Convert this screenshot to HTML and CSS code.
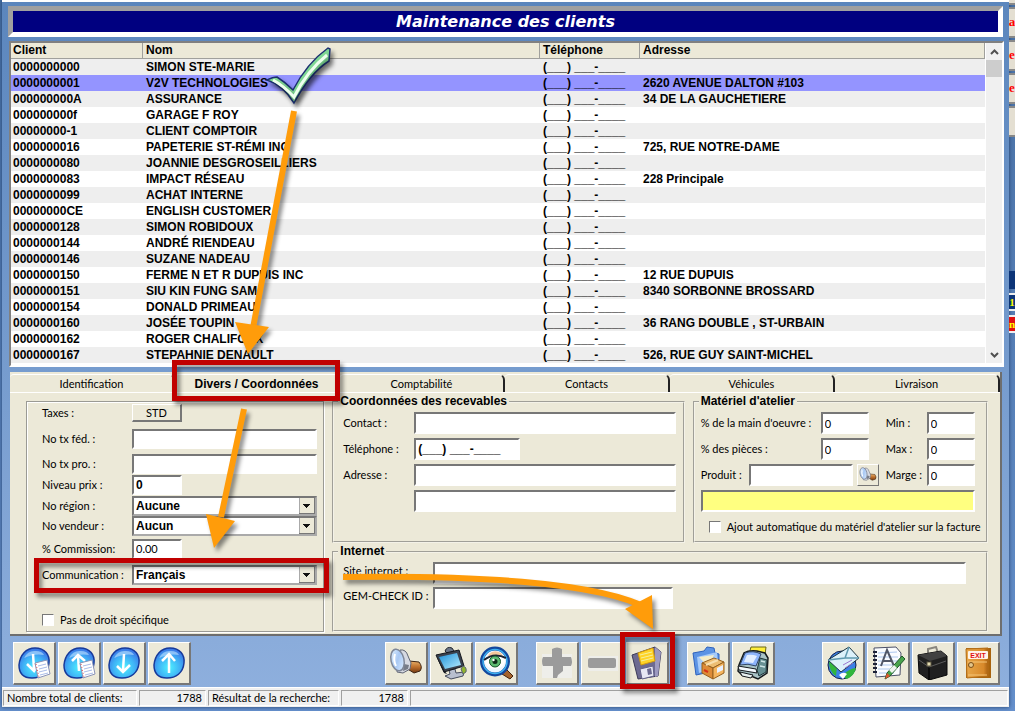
FILE: index.html
```html
<!DOCTYPE html>
<html lang="fr">
<head>
<meta charset="utf-8">
<title>Maintenance des clients</title>
<link rel="stylesheet" href="styles.css">
</head>
<body>
<svg class="defs" aria-hidden="true">
  <defs>
    <radialGradient id="ball" cx=".5" cy=".65" r=".6"><stop offset="0" stop-color="#4ff0ff"/><stop offset=".6" stop-color="#3fb2f6"/><stop offset="1" stop-color="#3b7be8"/></radialGradient>
    <linearGradient id="glass" x1="0" y1="0" x2="1" y2="1"><stop offset="0" stop-color="#e8f5ff"/><stop offset=".5" stop-color="#a8c8f4"/><stop offset="1" stop-color="#e2f0ff"/></linearGradient>
    <linearGradient id="wood" x1="0" y1="0" x2="0" y2="1"><stop offset="0" stop-color="#eab068"/><stop offset=".5" stop-color="#bd6f2c"/><stop offset="1" stop-color="#713812"/></linearGradient>
    <linearGradient id="screen" x1="0" y1="0" x2="1" y2="1"><stop offset="0" stop-color="#1c8fd8"/><stop offset="1" stop-color="#b5ecff"/></linearGradient>
    <linearGradient id="door" x1="0" y1="0" x2="1" y2="0"><stop offset="0" stop-color="#e8a84a"/><stop offset=".8" stop-color="#d8892a"/><stop offset="1" stop-color="#a86010"/></linearGradient>
    <g id="notepad"><path d="M18 17l12-3 3 14-12 4z" fill="#fff" stroke="#8a93b8"/><path d="M21 20l8-2M22 23l8-2M22 26l8-2M23 29l8-2" stroke="#a9bce8"/><path d="M19 18l3 13" stroke="#e05050" stroke-dasharray="1 2"/></g>
    <symbol id="lamp" viewBox="0 0 34 34">
      <path d="M20 15l10 1q4 5 1 9l-6 2-8-5z" fill="url(#wood)" stroke="#3d2412"/>
      <path d="M11 4q6-1 8 6l3 7-1 6-7 4-6-1z" fill="#d6d9e2" stroke="#5f6474"/>
      <path d="M15 18l5 1-1 4-5 2z" fill="#777c88"/>
      <ellipse cx="8.500" cy="14" rx="6.500" ry="11" transform="rotate(-12 8.500 14)" fill="url(#glass)" stroke="#7f8798" stroke-width="1.500"/>
      <path d="M6 8q-2 6 1 12" stroke="#fff" stroke-width="2" fill="none"/>
    </symbol>
  </defs>
</svg>

<div class="screen">
<main class="window">
  <h1 class="title">Maintenance des clients</h1>

  <div class="list">
    <table class="clients">
      <colgroup><col class="c-id"><col class="c-name"><col class="c-tel"><col></colgroup>
      <thead><tr><th>Client</th><th>Nom</th><th>Téléphone</th><th>Adresse</th></tr></thead>
      <tbody>
        <tr><td>0000000000</td><td>SIMON STE-MARIE</td><td>(___) ___-____</td><td></td></tr>
        <tr class="selected"><td>0000000001</td><td>V2V TECHNOLOGIES</td><td>(___) ___-____</td><td>2620 AVENUE DALTON #103</td></tr>
        <tr><td>000000000A</td><td>ASSURANCE</td><td>(___) ___-____</td><td>34 DE LA GAUCHETIERE</td></tr>
        <tr><td>000000000f</td><td>GARAGE F ROY</td><td>(___) ___-____</td><td></td></tr>
        <tr><td>00000000-1</td><td>CLIENT COMPTOIR</td><td>(___) ___-____</td><td></td></tr>
        <tr><td>0000000016</td><td>PAPETERIE ST-RÉMI INC</td><td>(___) ___-____</td><td>725, RUE NOTRE-DAME</td></tr>
        <tr><td>0000000080</td><td>JOANNIE DESGROSEILLIERS</td><td>(___) ___-____</td><td></td></tr>
        <tr><td>0000000083</td><td>IMPACT RÉSEAU</td><td>(___) ___-____</td><td>228 Principale</td></tr>
        <tr><td>0000000099</td><td>ACHAT INTERNE</td><td>(___) ___-____</td><td></td></tr>
        <tr><td>00000000CE</td><td>ENGLISH CUSTOMER</td><td>(___) ___-____</td><td></td></tr>
        <tr><td>0000000128</td><td>SIMON ROBIDOUX</td><td>(___) ___-____</td><td></td></tr>
        <tr><td>0000000144</td><td>ANDRÉ RIENDEAU</td><td>(___) ___-____</td><td></td></tr>
        <tr><td>0000000146</td><td>SUZANE NADEAU</td><td>(___) ___-____</td><td></td></tr>
        <tr><td>0000000150</td><td>FERME N ET R DUPUIS INC</td><td>(___) ___-____</td><td>12 RUE DUPUIS</td></tr>
        <tr><td>0000000151</td><td>SIU KIN FUNG SAM</td><td>(___) ___-____</td><td>8340 SORBONNE BROSSARD</td></tr>
        <tr><td>0000000154</td><td>DONALD PRIMEAU</td><td>(___) ___-____</td><td></td></tr>
        <tr><td>0000000160</td><td>JOSÉE TOUPIN</td><td>(___) ___-____</td><td>36 RANG DOUBLE , ST-URBAIN</td></tr>
        <tr><td>0000000162</td><td>ROGER CHALIFOUX</td><td>(___) ___-____</td><td></td></tr>
        <tr><td>0000000167</td><td>STEPAHNIE DENAULT</td><td>(___) ___-____</td><td>526, RUE GUY SAINT-MICHEL</td></tr>
      </tbody>
    </table>
    <div class="scrollbar">
      <button class="scroll-btn" aria-label="Défiler vers le haut"><svg width="9" height="6"><path d="M1 5l3.500-3.500L8 5" fill="none" stroke="#505050" stroke-width="2"/></svg></button>
      <div class="thumb"></div>
      <button class="scroll-btn" aria-label="Défiler vers le bas"><svg width="9" height="6"><path d="M1 1l3.500 3.500L8 1" fill="none" stroke="#505050" stroke-width="2"/></svg></button>
    </div>
  </div>

  <section class="panel">
    <div class="tabs" role="tablist">
      <button class="tab" role="tab">Identification</button>
      <button class="tab active" role="tab" aria-selected="true">Divers / Coordonnées</button>
      <button class="tab" role="tab">Comptabilité</button>
      <button class="tab" role="tab">Contacts</button>
      <button class="tab" role="tab">Véhicules</button>
      <button class="tab" role="tab">Livraison</button>
    </div>
    <form class="groups">
      <div class="group general">
        <label for="taxes">Taxes :</label><button type="button" id="taxes" class="std">STD</button>
        <label for="fed">No tx féd. :</label><input id="fed">
        <label for="pro">No tx pro. :</label><input id="pro">
        <label for="niveau">Niveau prix :</label><input id="niveau" class="short strong" value="0">
        <label for="region">No région :</label><select id="region"><option>Aucune</option></select>
        <label for="vendeur">No vendeur :</label><select id="vendeur"><option>Aucun</option></select>
        <label for="commission">% Commission:</label><input id="commission" class="short" value="0.00">
        <label for="comm">Communication :</label><select id="comm"><option>Français</option></select>
        <label class="check"><input type="checkbox">Pas de droit spécifique</label>
      </div>

      <fieldset class="group contact">
        <legend>Coordonnées des recevables</legend>
        <div class="contact-grid">
          <label for="contact">Contact :</label><input id="contact">
          <label for="tel">Téléphone :</label><input id="tel" class="phone strong" value="(___) ___-____">
          <label for="adr">Adresse :</label><input id="adr">
          <input class="second" aria-label="Adresse, suite">
        </div>
      </fieldset>

      <fieldset class="group workshop">
        <legend>Matériel d'atelier</legend>
        <div class="workshop-grid">
          <label for="mo">% de la main d'oeuvre :</label><input id="mo" value="0">
          <label for="min">Min :</label><input id="min" value="0">
          <label for="pieces">% des pièces :</label><input id="pieces" value="0">
          <label for="max">Max :</label><input id="max" value="0">
          <div class="product"><label for="produit">Produit :</label><input id="produit"><button type="button" class="find" aria-label="Rechercher un produit"><svg width="18" height="18"><use href="#lamp"/></svg></button></div>
          <label for="marge">Marge :</label><input id="marge" value="0">
          <input class="yellow" aria-label="Description du produit" readonly>
          <label class="check"><input type="checkbox">Ajout automatique du matériel d'atelier sur la facture</label>
        </div>
      </fieldset>

      <fieldset class="group internet">
        <legend>Internet</legend>
        <div class="internet-grid">
          <label for="site">Site internet :</label><input id="site">
          <label for="gem">GEM-CHECK ID :</label><input id="gem" class="gem">
        </div>
      </fieldset>
    </form>
  </section>

  <nav class="toolbar">
    <div class="tools">
      <button class="tool" aria-label="Premier"><svg viewBox="0 0 34 34"><path d="M18 2C28 2 33 9 32 17 31 27 24 32 15 32 6 32 2 27 2 19 3 9 9 2 18 2z" fill="url(#ball)" stroke="#173a9a" stroke-width="1.500"/><path d="M7 12q4-8 12-7 6 0 8 4-9-2-20 3z" fill="#bfe3ff" opacity=".6"/><path d="M16 8l1 15M10 18l7 7 4-7" fill="none" stroke="#fff" stroke-width="2.500"/><use href="#notepad"/></svg></button>
      <button class="tool" aria-label="Précédent"><svg viewBox="0 0 34 34"><path d="M18 2C28 2 33 9 32 17 31 27 24 32 15 32 6 32 2 27 2 19 3 9 9 2 18 2z" fill="url(#ball)" stroke="#173a9a" stroke-width="1.500"/><path d="M7 12q4-8 12-7 6 0 8 4-9-2-20 3z" fill="#bfe3ff" opacity=".6"/><path d="M17 25l-1-15M10 15l6-6 7 6" fill="none" stroke="#fff" stroke-width="2.500"/><use href="#notepad"/></svg></button>
      <button class="tool" aria-label="Suivant"><svg viewBox="0 0 34 34"><path d="M18 2C28 2 33 9 32 17 31 27 24 32 15 32 6 32 2 27 2 19 3 9 9 2 18 2z" fill="url(#ball)" stroke="#173a9a" stroke-width="1.500"/><path d="M7 12q4-8 12-7 6 0 8 4-9-2-20 3z" fill="#bfe3ff" opacity=".6"/><path d="M17 8l-1 17M10 20l6 6 7-7" fill="none" stroke="#fff" stroke-width="2.500"/></svg></button>
      <button class="tool" aria-label="Dernier"><svg viewBox="0 0 34 34"><path d="M18 2C28 2 33 9 32 17 31 27 24 32 15 32 6 32 2 27 2 19 3 9 9 2 18 2z" fill="url(#ball)" stroke="#173a9a" stroke-width="1.500"/><path d="M7 12q4-8 12-7 6 0 8 4-9-2-20 3z" fill="#bfe3ff" opacity=".6"/><path d="M17 27V9M10 15l7-7 6 7" fill="none" stroke="#fff" stroke-width="2.500"/></svg></button>
    </div>
    <span class="gap wide"></span>
    <div class="tools">
      <button class="tool" aria-label="Recherche"><svg viewBox="0 0 34 34"><use href="#lamp"/></svg></button>
      <button class="tool" aria-label="Écran"><svg viewBox="0 0 34 34"><path d="M15 24l6-1 1 4 8-1-1 4-12 3-6-3 5-2z" fill="#b8bfce" stroke="#444b5c"/><path d="M11 5q2-5 7-3l2 3-6 3z" fill="#6c7688" stroke="#20242c"/><path d="M2 9l23-5 5 16-20 6z" fill="#3a414e" stroke="#14171d"/><path d="M5 11l18-4 4 12-16 4z" fill="url(#screen)"/><path d="M2 10l8 17 3 1-3-4z" fill="#151a22"/><path d="M29 20q4 1 3 6l-3 2-2-5z" fill="#91b52e" stroke="#5a6470"/></svg></button>
      <button class="tool" aria-label="Aperçu"><svg viewBox="0 0 34 34"><path d="M24 24l4 0 6 6-3 3-8-5z" fill="#a4622c" stroke="#432109"/><circle cx="16" cy="15.500" r="13" fill="#eef7ff" stroke="#14479c" stroke-width="4"/><circle cx="16" cy="15.500" r="12" fill="none" stroke="#3db0f2" stroke-width="1.500"/><path d="M10 8q5-5 12-1l2 3H9z" fill="#f4c89c"/><path d="M5 14q10-9 22-2-1 10-11 11Q8 23 5 14z" fill="#fff"/><path d="M5 14q10-8 22-2" fill="none" stroke="#1a2230" stroke-width="2"/><circle cx="16" cy="15.500" r="5.500" fill="#5cba70" stroke="#16562c"/><circle cx="16" cy="15.500" r="2.500" fill="#0c2b18"/><circle cx="14.500" cy="14" r="1.200" fill="#fff"/></svg></button>
    </div>
    <span class="gap"></span>
    <div class="tools">
      <button class="tool" aria-label="Ajouter"><svg viewBox="0 0 34 34"><path d="M2 8h30v24H2z" fill="#eeeeea"/><path d="M12 3q5-3 10 0v8h9q2 5 0 9h-8v5l-5 4-1 3h-4V20H3q-2-5 0-9h9z" fill="#9b9b9b"/></svg></button>
      <button class="tool" aria-label="Supprimer"><svg viewBox="0 0 34 34"><path d="M3 10h30v15H3z" fill="#eeeeea"/><rect x="3" y="12" width="28" height="10" rx="2" fill="#9b9b9b"/></svg></button>
      <button class="tool" aria-label="Enregistrer"><svg viewBox="0 0 34 34"><path d="M2 9L25 1l6 5-3 24-20 3z" fill="#6d6a91" stroke="#3c3a58"/><path d="M25 1l6 5-3 24-3 1z" fill="#9d9ac0"/><path d="M8 7l15-5 2 13-14 4z" fill="#ffd326" stroke="#d29a10"/><path d="M10 9l12-3M11 12l12-3M11 15l12-3" stroke="#f4f0a0"/><path d="M10 23l13-3 1 10-12 3z" fill="#e7e7f3" stroke="#63618a"/><path d="M17 23l4-1 1 6-4 1z" fill="#6a6890"/></svg></button>
    </div>
    <span class="gap"></span>
    <div class="tools">
      <button class="tool" aria-label="Produits"><svg viewBox="0 0 34 34"><path d="M2 7l11-2 3-4 7 1 1 5 4 1v16L5 29z" fill="#5c93e4" stroke="#2e62bd"/><path d="M6 11l20-5 1 14-19 7z" fill="#a6cbfa"/><path d="M8 11l15-2-6 12z" fill="#f6edc7"/><path d="M11 17l12-5 10 4-11 6z" fill="#edbd72" stroke="#96601f"/><path d="M11 17l11 5v11l-11-6z" fill="#dd8b37" stroke="#96601f"/><path d="M22 22l11-6v11l-11 6z" fill="#f5b55e" stroke="#96601f"/><path d="M26 22l6-3v5l-6 3z" fill="#e9f0ff"/><path d="M15 19l12-5" stroke="#f8dfaf" stroke-width="2"/><path d="M13 24l4 2" stroke="#d63119" stroke-width="2"/></svg></button>
      <button class="tool" aria-label="Imprimer"><svg viewBox="0 0 34 34"><path d="M15 1h15l-1 8-16-1z" fill="#ffef3c" stroke="#6a6718"/><path d="M8 7q5-3 13-2l8 2 3 5-1 15-9 6-7-3-9-1-4-4 1-6z" fill="#a9c3c6" stroke="#14191c" stroke-width="1.500"/><path d="M9 7q8-3 16 1l-5 12q-8-3-16-1z" fill="#8db4fb" stroke="#2e4468"/><path d="M11 9q5-1 10 1l-4 7-9-1z" fill="#e2eeff"/><path d="M2 20l18 3 1 4-18-3z" fill="#f4faff" stroke="#15191d"/><path d="M4 26l13 3-2 3-9-2z" fill="#e6efef" stroke="#15191d"/><path d="M24 12l7 2-1 12-7 4-2-6z" fill="#668f92" stroke="#20373a"/><path d="M25 15l4 1M24 20l5 1" stroke="#cfe6e6" stroke-width="1.500"/></svg></button>
    </div>
    <span class="gap mid"></span>
    <div class="tools">
      <button class="tool" aria-label="Courriel"><svg viewBox="0 0 34 34"><circle cx="16" cy="19" r="14" fill="#3c80e6" stroke="#14204c"/><path d="M3 15q4 1 8 6l-1 9q-7-4-7-15zM17 29q7-7 13-7-2 9-10 11z" fill="#31b63c"/><path d="M2 14L23 1l10 11-18 14z" fill="#dcf1fa" stroke="#1b3440"/><path d="M2 14l17-2 4-11M19 12l14 0" fill="none" stroke="#5f99af" stroke-width="1.500"/><path d="M17 19l9-5M19 22l8-5" stroke="#9c78cf"/><path d="M13 29q4-4 8-1l-4 5z" fill="#fff"/></svg></button>
      <button class="tool" aria-label="Notes"><svg viewBox="0 0 34 34"><path d="M3 2l22-1 5 6-1 22L5 31z" fill="#fafcff" stroke="#4b5068"/><path d="M7 7l19-1M7 11h20M7 15h20M7 19h20M7 23h18M8 27h15" stroke="#adc8ef"/><path d="M4 5v24" stroke="#1d2238" stroke-width="4" stroke-dasharray="2 2"/><path d="M10 20l6-16 7 16M12 15h9" fill="none" stroke="#515767" stroke-width="2"/><path d="M31 10l3 3-15 17-5 3 2-6z" fill="#48a34c" stroke="#1e5829"/><path d="M18 24l3 3 5-5-3-3z" fill="#eef3ef"/><path d="M14 33l2-6 3 3z" fill="#e0552c"/></svg></button>
      <button class="tool" aria-label="Dossier"><svg viewBox="0 0 34 34"><path d="M12 9V3l8-2 2 6" fill="none" stroke="#89867e" stroke-width="2"/><path d="M2 9l23-4 6 5v19l-18 5L3 27z" fill="#202020" stroke="#080808"/><path d="M2 9l23-4 6 5-17 5z" fill="#414141"/><path d="M13 15v19" stroke="#050505" stroke-width="1.500"/><path d="M3 14l10 7 17-6" fill="none" stroke="#5c5c5c"/><rect x="11" y="16" width="4" height="4" fill="#e5ddb1" stroke="#5a5540"/></svg></button>
      <button class="tool" aria-label="Quitter"><svg viewBox="0 0 34 34"><path d="M5 2h25v30H5z" fill="#a8630d"/><path d="M5 3l22-1v28L6 32z" fill="url(#door)" stroke="#b56f18"/><path d="M7 16h19M7 29h19" stroke="#f4c477"/><rect x="7" y="5" width="20" height="8" rx="1" fill="#fff3e8"/><text x="17" y="11.500" class="exit">EXIT</text><circle cx="10" cy="19" r="2.500" fill="#e3c58b" stroke="#7b4d16"/></svg></button>
    </div>
  </nav>

  <footer class="status">
    <span class="cell s1">Nombre total de clients:</span><span class="cell num s2">1788</span>
    <span class="cell s3">Résultat de la recherche:</span><span class="cell num s4">1788</span><span class="cell rest"></span>
  </footer>
</main>
<aside class="behind">
  <div class="peek"></div><div class="peek">a</div><div class="peek">e</div><div class="peek">e</div><div class="peek"></div>
  <div class="far"><div class="navy"></div><div class="navy yel">1</div><div class="navy red">n</div></div>
</aside>
</div>

<svg class="notes" viewBox="0 0 1015 711" aria-hidden="true">
  <path d="M267 80q6-3 10-3 8 5 16 13 14-27 35-42l2 1-1 12q-19 12-35 42-11-18-27-23z" fill="#7fd894" stroke="#1c2f70" stroke-width="1.500"/>
  <path d="M273 80q11 6 21 17 13-26 33-42" fill="none" stroke="#eeffee" stroke-width="3"/>
  <g fill="none" stroke="#ff9c0a" stroke-width="6"><path d="M294 111L253 328M244 409l-23 108"/><path d="M343 577Q570 574 641 605"/></g>
  <path d="M235 322l34 5-21 27zM206 514l29 7-21 27zM625 609l27-14 1 34z" fill="#ff9c0a"/>
  <g fill="none" stroke="#c00000" stroke-width="5"><path d="M174.500 362.500h163v36h-163zM36.500 560.500h290v30h-290zM622.500 634.500h50v52h-50z"/></g>
</svg>
</body>
</html>
```
FILE: styles.css
```css
* { box-sizing: border-box; }

body {
  margin: 0;
  background: #5680b4;
  color: #000;
  font: 11px/14px Lato, "Liberation Sans", Arial, sans-serif;
}

button, input, select { font: inherit; color: inherit; margin: 0; border-radius: 0; }
.defs { position: absolute; width: 0; height: 0; }

.screen {
  position: relative;
  display: flex;
  min-height: 100vh;
  padding: 0 0 4px 2px;
  overflow: hidden;
  background: linear-gradient(#4870a4, #6690cc);
}

.window {
  flex: 1;
  min-width: 0;
  display: flex;
  flex-direction: column;
  border-top: 2px solid #fff;
  background: linear-gradient(#5b86bd, #8fb0de);
  box-shadow: 0 0 4px #23406c;
}

.title {
  margin: 4px 6px;
  border: 5px solid;
  border-color: #a0a0a0 #fff #fff #a0a0a0;
  background: #000080;
  color: #fff;
  text-align: center;
  font: italic bold 16px/21px "DejaVu Sans", Verdana, sans-serif;
}

.list {
  display: flex;
  margin: 0 5px 0 7px;
  padding-bottom: 2px;
  border: 2px solid;
  border-color: #808080 #fff #fff #808080;
  background: #fff;
}
.clients {
  flex: 1;
  min-width: 0;
  table-layout: fixed;
  border-collapse: separate;
  border-spacing: 0;
  font: bold 12px/16px "Liberation Sans", Arial, sans-serif;
}
.c-id { width: 132px; }
.c-name { width: 397px; }
.c-tel { width: 100px; }
.clients th, .clients td { height: 16px; padding: 0 3px; text-align: left; white-space: nowrap; overflow: hidden; }
.clients th { background: #ece9d8; border: solid #a0a09c; border-width: 0 1px 1px 0; line-height: 15px; }
.clients td:first-child, .clients th:first-child { padding-left: 2px; }
.clients tbody tr:nth-child(odd) { background: #eee; }
.clients tbody .selected { background: #9494ff; }

.scrollbar { width: 17px; display: flex; flex-direction: column; background: #f0f0f0; border-left: 1px solid #fff; }
.scroll-btn { height: 17px; padding: 0; border: 0; background: none; line-height: 0; }
.thumb { height: 17px; margin-bottom: auto; background: #cdcdcd; }

.panel {
  margin: 5px 7px 0 8px;
  background: #ece9d8;
  border: solid #6e6e6e;
  border-width: 0 2px 2px 0;
}
.tabs { display: flex; height: 21px; padding-top: 2px; border-bottom: 1px solid #fff; }
.tab {
  flex: 1;
  padding: 0;
  border: 0;
  border-top: 1px solid #fff;
  border-right: 2px solid #222;
  border-radius: 4px 6px 0 0;
  background: #ece9d8;
}
.tab.active { border-right-color: transparent; font: bold 12px/14px "Liberation Sans", Arial, sans-serif; }

.groups {
  display: grid;
  grid-template: 150px 89px / 298fr 352fr 295fr;
  column-gap: 8px;
  padding: 0 12px 2px 16px;
}
.group { min-width: 0; margin: 0; padding: 0; border: 1px solid #9a9a94; box-shadow: 1px 1px 0 #fff, inset 1px 1px 0 #fff; }
fieldset.group { box-shadow: none; border: 2px groove #f4f2e8; }
legend { margin-left: 4px; padding: 0 2px; font: bold 12px/17px "Liberation Sans", Arial, sans-serif; }

input:not([type=checkbox]), select {
  width: 100%;
  min-width: 0;
  height: 22px;
  padding: 0 2px;
  border: 2px solid;
  border-color: #777 #fff #fff #777;
  background: #fff;
}
.strong, select { font: bold 12px/16px "Liberation Sans", Arial, sans-serif !important; }
.check { display: flex; align-items: center; gap: 6px; white-space: nowrap; }
.check input {
  appearance: none;
  flex: none;
  width: 12px;
  height: 12px;
  border: 1px solid;
  border-color: #777 #fff #fff #777;
  background: #fff;
}

.general {
  grid-row: 1 / 3;
  margin-top: 8px;
  padding: 0 6px 0 15px;
  display: grid;
  grid-template-columns: 90px 1fr;
  grid-template-rows: 22px 30px 20px 22px 20px 20px 25px 28px 20px 22px;
  align-items: center;
}
.general input:not([type=checkbox]), .general select { height: 20px; }
.general .short { width: 50px; height: 19px; }
.general .check { grid-area: 10 / 1 / 11 / 3; }
.std {
  width: 50px;
  height: 18px;
  padding: 0;
  background: #ece9d8;
  border: solid;
  border-width: 1px 2px 2px 1px;
  border-color: #fff #777 #777 #fff;
}
select {
  appearance: none;
  border-color: #777 #aaa #aaa #777;
  background:
    linear-gradient(#111, #111) right 5px top 6px / 7px 1px no-repeat,
    linear-gradient(#111, #111) right 6px top 7px / 5px 1px no-repeat,
    linear-gradient(#111, #111) right 7px top 8px / 3px 1px no-repeat,
    linear-gradient(#111, #111) right 8px top 9px / 1px 1px no-repeat,
    linear-gradient(#777, #777) right bottom / 16px 1px no-repeat,
    linear-gradient(to right, #aaa 1px, #ece9d8 1px 15px, #777 15px) right / 16px 100% no-repeat,
    #fff;
}

.contact-grid, .internet-grid, .workshop-grid { display: grid; grid-auto-rows: 26px; align-items: center; }
.contact-grid { grid-template-columns: 71px 1fr; padding: 0 7px 0 9px; }
.contact .phone { width: 106px; }
.contact .second { grid-column: 2; }

.workshop-grid { grid-template-columns: 120px 48px 17px 41px 1fr; padding: 0 11px 0 6px; }
.workshop-grid > label:nth-of-type(even):not(.check), .workshop-grid > label[for=marge] { grid-column: 4; }
.product { grid-column: 1 / 4; display: flex; align-items: center; }
.product label { flex: 0 0 48px; }
.product input { flex: 1; }
.find { flex: none; width: 22px; height: 22px; margin: 0 7px 0 4px; padding: 0; line-height: 0; background: #ece9d8; border: 1px solid; border-color: #fff #777 #777 #fff; }
.workshop .yellow { grid-column: 1 / -1; background: #ffff80; }
.workshop .check { grid-column: 1 / -1; padding-left: 8px; }

.internet { grid-column: 2 / 4; }
.internet-grid { grid-template-columns: 90px 1fr; grid-auto-rows: 25px; padding: 0 20px 0 9px; }
.internet-grid label { padding-bottom: 4px; }
.internet .gem { width: 240px; }

.toolbar { display: flex; padding: 6px 9px 2px 11px; }
.tools { display: flex; gap: 2px; }
.gap { flex: 18 1 0; }
.gap.wide { flex-grow: 194; }
.gap.mid { flex-grow: 47; }
.tool {
  width: 43px;
  height: 43px;
  padding: 3px;
  line-height: 0;
  background: #ece9d8;
  border: solid;
  border-width: 1px 2px 2px 1px;
  border-color: #fff #777 #777 #fff;
}
.tool svg { width: 34px; height: 34px; }
.exit { font: bold 7px "Liberation Sans", Arial, sans-serif; fill: #e01010; text-anchor: middle; }

.status { display: flex; gap: 2px; padding: 2px 1px 1px; background: #f0f0f0; border-top: 1px solid #fff; }
.cell { height: 16px; padding: 0 3px; border: 1px solid; border-color: #a0a0a0 #fff #fff #a0a0a0; white-space: nowrap; }
.s1 { width: 134px; }
.s2, .s4 { width: 67px; }
.s3 { width: 131px; }
.rest { flex: 1; }
.num { text-align: right; }

.behind { width: 6px; overflow: hidden; font: bold 13px/26px "Liberation Serif", serif; color: #f00; }
.peek { display: flex; justify-content: center; height: 31px; margin-bottom: 2px; background: #e4dfd2; border: solid #888; border-width: 2px 0; }
.peek:first-child { height: 5px; border-top: 0; }
.far { margin-top: 134px; color: #ff0; font-size: 11px; }
.navy { display: flex; justify-content: center; height: 18px; margin-bottom: 4px; background: #0c3478; line-height: 14px; }
.yel, .red { border: 2px solid #eee; border-width: 2px 0; }
.red { background: #e01010; }

.notes { position: absolute; left: 0; top: 0; width: 1015px; pointer-events: none; }
.notes > * { filter: drop-shadow(3px 4px 2px rgba(0, 0, 0, .45)); }
```
